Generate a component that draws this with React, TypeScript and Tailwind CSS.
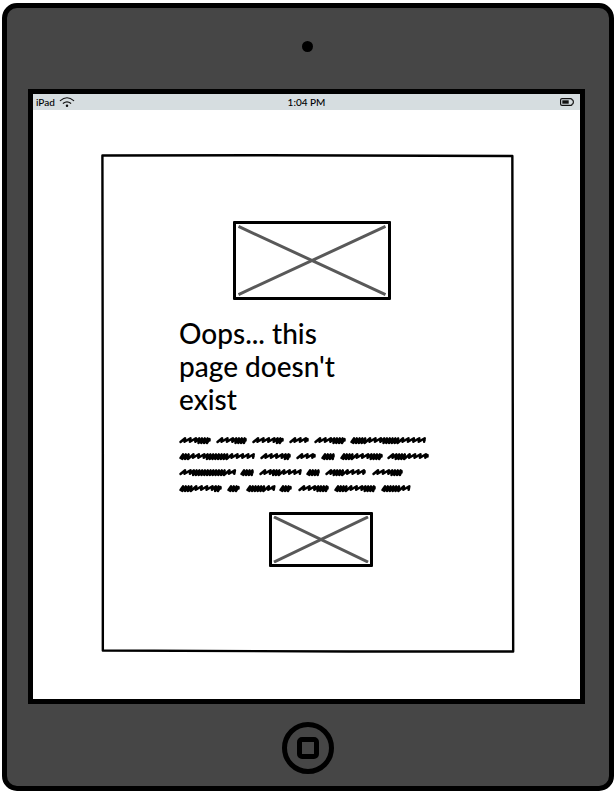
type Word = { from: number; to: number; dense?: [number, number][] };

const lines: Word[][] = [
  [
    { from: 0, to: 32, dense: [[17, 29]] },
    { from: 37, to: 68, dense: [[54, 66]] },
    { from: 73, to: 105, dense: [[91, 102]] },
    { from: 110, to: 130 },
    { from: 135, to: 167, dense: [[152, 165]] },
    { from: 171, to: 247, dense: [[171, 184], [199, 219]] },
  ],
  [
    { from: 0, to: 76, dense: [[0, 8], [26, 47]] },
    { from: 81, to: 112, dense: [[99, 110]] },
    { from: 117, to: 137 },
    { from: 142, to: 156, dense: [[142, 156]] },
    { from: 161, to: 204, dense: [[161, 171], [189, 203]] },
    { from: 208, to: 250, dense: [[214, 226]] },
  ],
  [
    { from: 0, to: 56, dense: [[11, 45]] },
    { from: 61, to: 75, dense: [[61, 75]] },
    { from: 80, to: 122, dense: [[87, 98]] },
    { from: 127, to: 141, dense: [[127, 141]] },
    { from: 146, to: 187, dense: [[152, 163]] },
    { from: 193, to: 224, dense: [[209, 222]] },
  ],
  [
    { from: 0, to: 43, dense: [[0, 11], [30, 42]] },
    { from: 48, to: 61, dense: [[48, 61]] },
    { from: 67, to: 95, dense: [[67, 84]] },
    { from: 100, to: 113, dense: [[100, 113]] },
    { from: 119, to: 150, dense: [[136, 148]] },
    { from: 155, to: 197, dense: [[155, 167], [183, 196]] },
    { from: 202, to: 231, dense: [[202, 218]] },
  ],
];

function scribble({ from, to, dense = [] }: Word) {
  let x = from + 1.5;
  let d = `M${x} 6`;
  while (x < to - 4) {
    const tight = dense.some(([a, b]) => x >= a && x < b);
    d += tight ? `L${x + 2.5} 2.4L${x + 1.8} 7` : `L${x + 4.6} 2.2L${x + 4} 5.8`;
    x += tight ? 2.8 : 5.4;
  }
  return d + `L${to - 1.5} 3L${to - 1.5} 4.6`;
}

function ScribbleLine({ words }: { words: Word[] }) {
  return (
    <svg className="block h-4 w-full overflow-visible" fill="none" stroke="#000" strokeWidth="2.5" strokeLinecap="round" strokeLinejoin="round" aria-hidden="true">
      {words.map((word) => (
        <path key={word.from} d={scribble(word)} />
      ))}
    </svg>
  );
}

function Placeholder({ className }: { className: string }) {
  return (
    <div className={`rounded-[1px] border-[3px] border-black p-px ${className}`}>
      <svg className="block h-full w-full" viewBox="0 0 100 100" preserveAspectRatio="none" stroke="#595959" strokeWidth="3" aria-hidden="true">
        <path d="M1 2L99 98M99 2L1 98" vectorEffect="non-scaling-stroke" />
      </svg>
    </div>
  );
}

function SketchedOutline() {
  return (
    <svg className="pointer-events-none absolute inset-0 h-full w-full overflow-visible" viewBox="0 0 100 100" preserveAspectRatio="none" fill="none" stroke="#000" strokeWidth="2.4" strokeLinejoin="round" aria-hidden="true">
      <path d="M0.1 0.1L40 0.05L99.6 0.2L99.7 50L99.8 99.9L60 99.9L0.2 99.7L0.2 60Z" vectorEffect="non-scaling-stroke" />
    </svg>
  );
}

function StatusBar() {
  return (
    <header className="grid h-4 grid-cols-3 items-center bg-[#d6dde0] px-[3px] text-[10px] leading-4 font-medium">
      <div className="flex items-center gap-1">
        <span>iPad</span>
        <svg className="h-3 w-4" viewBox="0 0 16 12" fill="none" stroke="#111" strokeWidth="1.1" strokeLinecap="round" aria-label="Wi-Fi">
          <path d="M1.3 4.6Q8 -1 14.7 4.6" />
          <path d="M4.3 7.3Q8 4.5 11.7 7.3" />
          <circle cx="8" cy="9.8" r="0.7" fill="#111" />
        </svg>
      </div>
      <time className="text-center">1:04 PM</time>
      <svg className="mr-[3px] h-2 w-3.5 justify-self-end" viewBox="0 0 14 8" fill="none" aria-label="Battery">
        <path d="M2 0.6H10.5Q12 0.6 12 1.6Q13.4 2 13.4 4T12 6.4Q12 7.4 10.5 7.4H2Q0.6 7.4 0.6 6V2Q0.6 0.6 2 0.6Z" stroke="#111" strokeWidth="1.2" />
        <path d="M2.3 2.3H8.7V5.7H2.3Z" fill="#111" />
      </svg>
    </header>
  );
}

export default function App() {
  return (
    <div className="bg-white px-0.5 pt-[3px] pb-0.5 font-['Lato','Liberation_Sans',sans-serif] text-black">
      <div className="rounded-[15px] border-[5px] border-black bg-[#464646] pr-6 pl-[21px]">
        <div className="flex h-[81px] items-center justify-center pb-1 pl-0.5">
          <div className="size-[11px] rounded-full bg-black" />
        </div>
        <div className="border-[5px] border-black bg-white">
          <StatusBar />
          <main className="pt-[45px] pr-[66px] pb-[47px] pl-[69px]">
            <section className="relative pt-[66px] pr-20 pb-[85px] pl-[77px]">
              <SketchedOutline />
              <Placeholder className="ml-[54px] h-[79px] w-[158px]" />
              <h1 className="mt-[17px] max-w-[180px] text-[28px] leading-[33px] font-medium">Oops... this page doesn't exist</h1>
              <div className="mt-5">
                {lines.map((words, i) => (
                  <ScribbleLine key={i} words={words} />
                ))}
              </div>
              <Placeholder className="mt-3 ml-[90px] h-[55px] w-[104px]" />
            </section>
          </main>
        </div>
        <div className="flex h-[82px] items-center justify-center pt-1.5 pl-[3px]">
          <button type="button" aria-label="Home" className="flex size-[52px] items-center justify-center rounded-full border-[5px] border-black">
            <span className="size-[22px] rounded-[5px] border-[5px] border-black" />
          </button>
        </div>
      </div>
    </div>
  );
}
